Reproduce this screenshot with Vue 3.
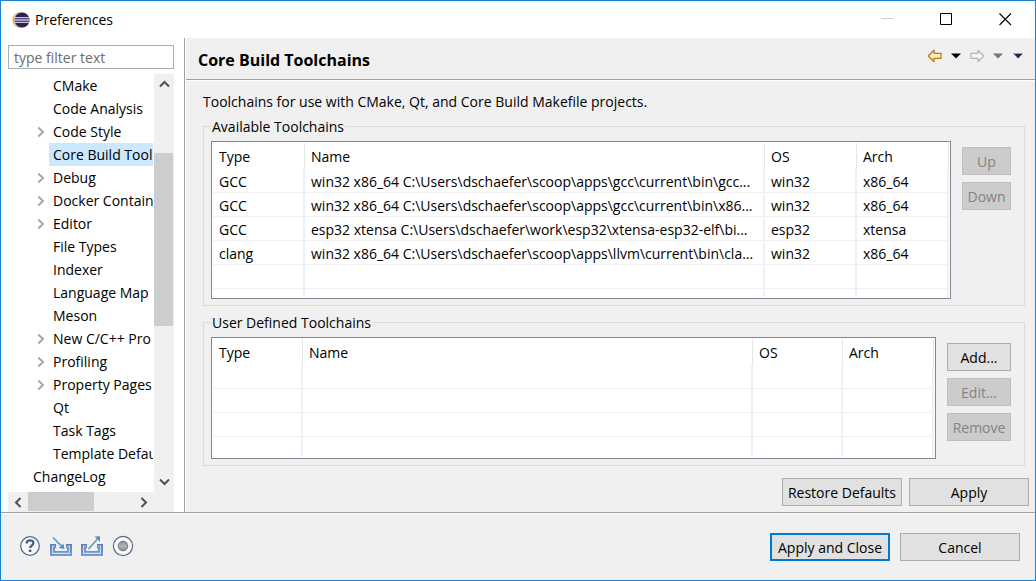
<script setup>
import { ref } from 'vue'

const filter = ref('')

const nodes = [
  { label: 'CMake' },
  { label: 'Code Analysis' },
  { label: 'Code Style', branch: true },
  { label: 'Core Build Tool', selected: true },
  { label: 'Debug', branch: true },
  { label: 'Docker Contain', branch: true },
  { label: 'Editor', branch: true },
  { label: 'File Types' },
  { label: 'Indexer' },
  { label: 'Language Map' },
  { label: 'Meson' },
  { label: 'New C/C++ Pro', branch: true },
  { label: 'Profiling', branch: true },
  { label: 'Property Pages', branch: true },
  { label: 'Qt' },
  { label: 'Task Tags' },
  { label: 'Template Defau' },
  { label: 'ChangeLog', top: true },
]

const columns = ['Type', 'Name', 'OS', 'Arch']

const available = [
  ['GCC', 'win32 x86_64 C:\\Users\\dschaefer\\scoop\\apps\\gcc\\current\\bin\\gcc...', 'win32', 'x86_64'],
  ['GCC', 'win32 x86_64 C:\\Users\\dschaefer\\scoop\\apps\\gcc\\current\\bin\\x86...', 'win32', 'x86_64'],
  ['GCC', 'esp32 xtensa C:\\Users\\dschaefer\\work\\esp32\\xtensa-esp32-elf\\bi...', 'esp32', 'xtensa'],
  ['clang', 'win32 x86_64 C:\\Users\\dschaefer\\scoop\\apps\\llvm\\current\\bin\\cla...', 'win32', 'x86_64'],
  ['', '', '', ''],
  ['', '', '', ''],
]

const userDefined = [0, 1, 2, 3].map(() => ['', '', '', ''])
</script>

<template>
  <div class="window">
    <header class="titlebar">
      <svg class="logo" width="18" height="18" viewBox="0 0 18 18" aria-hidden="true">
        <circle cx="8.5" cy="9" r="8" fill="#f7a13c" />
        <circle cx="9.8" cy="9" r="8" fill="#f3e4d4" />
        <circle cx="10" cy="9" r="7.6" fill="#2c2255" />
        <path d="M2.6 6.6h14.8M2.2 9h15.6M2.6 11.4h14.8" stroke="#c9c5de" stroke-width="1.4" />
      </svg>
      <h1>Preferences</h1>
      <div class="window-buttons">
        <button type="button" aria-label="Minimize" disabled>
          <svg width="13" height="13" viewBox="0 0 13 13"><path d="M0 5.5h12" stroke="#ccc" /></svg>
        </button>
        <button type="button" aria-label="Maximize">
          <svg width="13" height="13" viewBox="0 0 13 13"><path d="M.5.5h11v11H.5z" fill="none" stroke="#000" /></svg>
        </button>
        <button type="button" aria-label="Close">
          <svg width="13" height="13" viewBox="0 0 13 13"><path d="M.5.5l11.5 11.5M12 .5L.5 12" stroke="#000" stroke-width="1.1" /></svg>
        </button>
      </div>
    </header>

    <div class="body">
      <nav class="sidebar">
        <input v-model="filter" class="filter" type="text" placeholder="type filter text" aria-label="Filter preferences" />
        <div class="tree-box">
          <ul class="tree" role="tree">
            <li
              v-for="node in nodes"
              :key="node.label"
              role="treeitem"
              :class="{ top: node.top }"
              :aria-selected="!!node.selected"
            >
              <button v-if="node.branch" type="button" class="expander" :aria-label="'Expand ' + node.label">
                <svg width="8" height="12" viewBox="0 0 8 12"><path d="M1.3 1.5L6 6 1.3 10.5" fill="none" stroke="#a6a6a6" stroke-width="2" /></svg>
              </button>
              <span v-else class="expander"></span>
              <span class="label" :class="{ selected: node.selected }">{{ node.label }}</span>
            </li>
          </ul>
          <div class="vscroll">
            <button type="button" aria-label="Scroll up">
              <svg width="11" height="8" viewBox="0 0 11 8"><path d="M1 6.5L5.5 2 10 6.5" fill="none" stroke="#505050" stroke-width="2" /></svg>
            </button>
            <div class="vtrack"><div class="vthumb"></div></div>
            <button type="button" aria-label="Scroll down">
              <svg width="11" height="8" viewBox="0 0 11 8"><path d="M1 1.5L5.5 6 10 1.5" fill="none" stroke="#505050" stroke-width="2" /></svg>
            </button>
          </div>
          <div class="hscroll">
            <button type="button" aria-label="Scroll left">
              <svg width="8" height="11" viewBox="0 0 8 11"><path d="M6.5 1L2 5.5 6.5 10" fill="none" stroke="#505050" stroke-width="2" /></svg>
            </button>
            <div class="htrack"><div class="hthumb"></div></div>
            <button type="button" aria-label="Scroll right">
              <svg width="8" height="11" viewBox="0 0 8 11"><path d="M1.5 1L6 5.5 1.5 10" fill="none" stroke="#505050" stroke-width="2" /></svg>
            </button>
          </div>
        </div>
      </nav>

      <main class="page">
        <div class="page-head">
          <h2>Core Build Toolchains</h2>
          <div class="history">
            <button type="button" aria-label="Back">
              <svg width="16" height="14" viewBox="0 0 16 14">
                <defs>
                  <linearGradient id="gold" x1="0" y1="0" x2="0" y2="1">
                    <stop offset="0" stop-color="#fffbe8" />
                    <stop offset="1" stop-color="#fbe08c" />
                  </linearGradient>
                </defs>
                <path d="M1.2 7L7 1.3v3h7v5H7v3.4z" fill="url(#gold)" stroke="#b97a14" stroke-width="1.3" stroke-linejoin="round" />
              </svg>
            </button>
            <button type="button" aria-label="Back history">
              <svg width="10" height="6" viewBox="0 0 10 6"><path d="M0 .5h10L5 5.5z" fill="#000" /></svg>
            </button>
            <button type="button" aria-label="Forward" disabled>
              <svg width="16" height="14" viewBox="0 0 16 14"><path d="M14.8 7L9 1.3v3H2v5h7v3.4z" fill="#f6f6f6" stroke="#b4b4b4" stroke-width="1.3" stroke-linejoin="round" /></svg>
            </button>
            <button type="button" aria-label="Forward history" disabled>
              <svg width="10" height="6" viewBox="0 0 10 6"><path d="M0 .5h10L5 5.5z" fill="#777" /></svg>
            </button>
            <button type="button" class="menu" aria-label="Menu">
              <svg width="10" height="6" viewBox="0 0 10 6"><path d="M0 .5h10L5 5.5z" fill="#6a3fa8" /><path d="M2 1h7L5.3 4.8z" fill="#2a2438" /></svg>
            </button>
          </div>
        </div>

        <div class="page-body">
          <p>Toolchains for use with CMake, Qt, and Core Build Makefile projects.</p>

          <fieldset>
            <legend>Available Toolchains</legend>
            <div class="group">
              <div class="table-frame">
                <table class="available">
                  <colgroup><col class="c-type" /><col /><col class="c-os" /><col class="c-arch" /></colgroup>
                  <thead>
                    <tr><th v-for="c in columns" :key="c" scope="col">{{ c }}</th></tr>
                  </thead>
                  <tbody>
                    <tr v-for="(row, i) in available" :key="i">
                      <td v-for="(cell, j) in row" :key="j">{{ cell }}</td>
                    </tr>
                  </tbody>
                </table>
              </div>
              <div class="actions narrow">
                <button type="button" class="btn" disabled>Up</button>
                <button type="button" class="btn" disabled>Down</button>
              </div>
            </div>
          </fieldset>

          <fieldset>
            <legend>User Defined Toolchains</legend>
            <div class="group">
              <div class="table-frame">
                <table class="user">
                  <colgroup><col class="c-type" /><col /><col class="c-os" /><col class="c-arch" /></colgroup>
                  <thead>
                    <tr><th v-for="c in columns" :key="c" scope="col">{{ c }}</th></tr>
                  </thead>
                  <tbody>
                    <tr v-for="(row, i) in userDefined" :key="i">
                      <td v-for="(cell, j) in row" :key="j">{{ cell }}</td>
                    </tr>
                  </tbody>
                </table>
              </div>
              <div class="actions">
                <button type="button" class="btn">Add...</button>
                <button type="button" class="btn" disabled>Edit...</button>
                <button type="button" class="btn" disabled>Remove</button>
              </div>
            </div>
          </fieldset>
        </div>

        <div class="page-buttons">
          <button type="button" class="btn wide">Restore Defaults</button>
          <button type="button" class="btn wide">Apply</button>
        </div>
      </main>
    </div>

    <footer class="footer">
      <svg width="0" height="0" class="defs" aria-hidden="true">
        <defs>
          <linearGradient id="tray" x1="0" y1="0" x2="0" y2="1">
            <stop offset="0" stop-color="#6080b4" />
            <stop offset="1" stop-color="#7a9cd6" />
          </linearGradient>
          <linearGradient id="dot" x1="0" y1="0" x2="0" y2="1">
            <stop offset="0" stop-color="#8c8c8c" />
            <stop offset=".5" stop-color="#b4b4b4" />
            <stop offset="1" stop-color="#8a8a8a" />
          </linearGradient>
        </defs>
      </svg>
      <div class="tools">
        <button type="button" aria-label="Help">
          <svg width="22" height="22" viewBox="0 0 22 22">
            <circle cx="11" cy="11" r="9.3" fill="#f8f9fb" stroke="#5a6c8c" stroke-width="1.3" />
            <path d="M7.6 8.6c0-4.2 6.8-4.2 6.8-.5 0 2.4-3.3 2.4-3.3 5" fill="none" stroke="#4a5f88" stroke-width="2.3" />
            <path d="M9.8 14.6h2.6v2.4H9.8z" fill="#4a5f88" />
          </svg>
        </button>
        <button type="button" aria-label="Import">
          <svg width="22" height="22" viewBox="0 0 22 22">
            <path d="M0 9h6v4H5v3h12v-3h-1V9h6v12H0z" fill="url(#tray)" />
            <path d="M5 11.2H2.6v7.2h16.8v-7.2H17" fill="none" stroke="#cfdcf2" stroke-width="1.1" />
            <path d="M3 2.5l9 9" stroke="#5a9cc6" stroke-width="1.6" /><path d="M14.5 14l-5.6-1 4.4-4.4z" fill="#4c90bc" />
          </svg>
        </button>
        <button type="button" aria-label="Export">
          <svg width="22" height="22" viewBox="0 0 22 22">
            <path d="M0 9h6v4H5v3h12v-3h-1V9h6v12H0z" fill="url(#tray)" />
            <path d="M5 11.2H2.6v7.2h16.8v-7.2H17" fill="none" stroke="#cfdcf2" stroke-width="1.1" />
            <path d="M7.5 14L16.5 4" stroke="#5a9cc6" stroke-width="1.6" /><path d="M19 1.2v5.6l-5.4-5.4z" fill="#4c90bc" />
          </svg>
        </button>
        <button type="button" aria-label="Oomph recorder">
          <svg width="22" height="22" viewBox="0 0 22 22">
            <circle cx="11" cy="11" r="9.6" fill="#f8f9fb" stroke="#5a6c8c" stroke-width="1.2" />
            <circle cx="11" cy="11" r="4.8" fill="url(#dot)" stroke="#777" />
          </svg>
        </button>
      </div>
      <div class="dialog-buttons">
        <button type="button" class="btn wide primary">Apply and Close</button>
        <button type="button" class="btn wide">Cancel</button>
      </div>
    </footer>
  </div>
</template>

<style>
body {
  margin: 0;
  background: #f0f0f0;
}
</style>

<style scoped>
.window {
  box-sizing: border-box;
  min-height: 100vh;
  display: flex;
  flex-direction: column;
  border: 1px solid #1883d7;
  background: #f0f0f0;
  color: #000;
  font: 14px/20px "Open Sans", "Noto Sans", sans-serif;
}
button,
input {
  font: inherit;
  color: inherit;
  box-sizing: border-box;
}
button {
  margin: 0;
  padding: 0;
  border: 0;
  background: none;
}
svg {
  display: block;
}
h1,
h2,
p {
  margin: 0;
}

.titlebar {
  display: flex;
  align-items: center;
  height: 37px;
  padding-left: 11px;
  background: #fff;
}
h1 {
  margin-left: 5px;
  font-size: 14px;
  font-weight: 400;
}
.window-buttons {
  display: flex;
  margin-left: auto;
}
.window-buttons button {
  display: flex;
  align-items: center;
  justify-content: center;
  width: 59px;
  height: 37px;
}

.body {
  flex: 1;
  display: flex;
}
.sidebar {
  display: flex;
  flex-direction: column;
  flex: none;
  box-sizing: border-box;
  width: 184px;
  padding: 7px 10px 0 7px;
  border-right: 1px solid #a0a0a0;
  background: #fff;
}
.filter {
  width: 100%;
  height: 24px;
  padding: 0 5px;
  border: 1px solid #abadb3;
  background: #fff;
  outline: 0;
}
.filter::placeholder {
  color: #6d6d6d;
  opacity: 1;
}
.tree-box {
  flex: 1;
  display: grid;
  grid-template-columns: minmax(0, 1fr) 20px;
  grid-template-rows: 1fr 20px;
  margin-top: 5px;
}
.tree {
  margin: 0 1px 0 0;
  padding: 0;
  list-style: none;
  overflow: hidden;
}
.tree li {
  display: flex;
  height: 23px;
  line-height: 23px;
  padding-left: 29px;
  white-space: nowrap;
}
.tree li.top {
  padding-left: 9px;
}
.expander {
  display: flex;
  align-items: center;
  flex: none;
  width: 12px;
}
.label {
  flex: 1 0 auto;
  padding-left: 4px;
}
.label.selected {
  background: #cce8ff;
}
.vscroll,
.hscroll {
  display: flex;
  background: #f0f0f0;
}
.vscroll {
  flex-direction: column;
}
.hscroll {
  grid-column: 1 / 3;
  padding-right: 20px;
}
.vscroll button,
.hscroll button {
  display: flex;
  align-items: center;
  justify-content: center;
  flex: none;
  width: 20px;
  height: 20px;
}
.vtrack,
.htrack {
  flex: 1;
}
.vtrack {
  padding-top: 59px;
}
.vthumb {
  width: 19px;
  height: 173px;
  background: #cdcdcd;
}
.hthumb {
  width: 66px;
  height: 19px;
  background: #cdcdcd;
}

.page {
  flex: 1;
  min-width: 0;
  display: flex;
  flex-direction: column;
  border-left: 1px solid #fff;
}
.page-head {
  display: flex;
  align-items: center;
  justify-content: space-between;
  height: 41px;
  padding: 0 12px;
  border-bottom: 1px solid #a0a0a0;
  box-shadow: 0 1px #fff;
}
h2 {
  padding-top: 2px;
  font-size: 16px;
  font-weight: 700;
}
.history {
  display: flex;
  align-items: center;
  gap: 8px;
  height: 36px;
  align-self: flex-start;
}
.history .menu {
  margin-left: 2px;
}
.page-body {
  flex: 1;
  padding: 12px 10px 0 17px;
}
p {
  margin-bottom: 3px;
}
fieldset {
  min-width: 0;
  margin: 0 0 5px;
  padding: 4px 13px 6px 7px;
  border: 1px solid #dcdcdc;
}
legend {
  padding: 2px 1px 0;
}
.group {
  display: flex;
  gap: 11px;
}
.table-frame {
  flex: 1;
  min-width: 0;
  padding: 1px;
  border: 1px solid #828790;
  background: #fff;
}
table {
  width: 100%;
  table-layout: fixed;
  border-collapse: separate;
  border-spacing: 0;
}
.c-type,
.c-os,
.c-arch {
  width: 92px;
}
.user .c-type,
.user .c-os {
  width: 90px;
}
.user .c-arch {
  width: 91px;
}
th,
td {
  box-sizing: border-box;
  padding: 2px 0 0 6px;
  text-align: left;
  font-weight: 400;
  white-space: nowrap;
  overflow: hidden;
}
th {
  height: 26px;
  border-right: 1px solid #e5e5e5;
}
td {
  height: 24px;
  border-right: 2px solid #ebf1fb;
  border-bottom: 1px solid #f0f0f0;
}
tr:last-child td {
  height: 20px;
  border-bottom: 0;
}
.available tr:last-child td {
  height: 8px;
}
.actions {
  flex: none;
  display: flex;
  flex-direction: column;
  gap: 7px;
  width: 64px;
  padding-top: 6px;
}
.actions.narrow {
  width: 49px;
}
.btn {
  height: 28px;
  padding-top: 2px;
  border: 1px solid #adadad;
  background: #e1e1e1;
  white-space: nowrap;
}
.btn:disabled {
  border-color: #bfbfbf;
  background: #ccc;
  color: #838383;
}
.btn.wide {
  width: 120px;
}
.btn.primary {
  border: 2px solid #0078d7;
}
.page-buttons {
  display: flex;
  justify-content: flex-end;
  gap: 7px;
  padding: 6px 6px 6px 0;
}

.footer {
  display: flex;
  justify-content: space-between;
  align-items: flex-start;
  padding: 20px 15px 19px 18px;
  border-top: 1px solid #a0a0a0;
  box-shadow: inset 0 1px #fff;
}
.defs {
  position: absolute;
}
.tools {
  display: flex;
  gap: 9px;
  padding-top: 2px;
}
.dialog-buttons {
  display: flex;
  gap: 10px;
}
</style>
